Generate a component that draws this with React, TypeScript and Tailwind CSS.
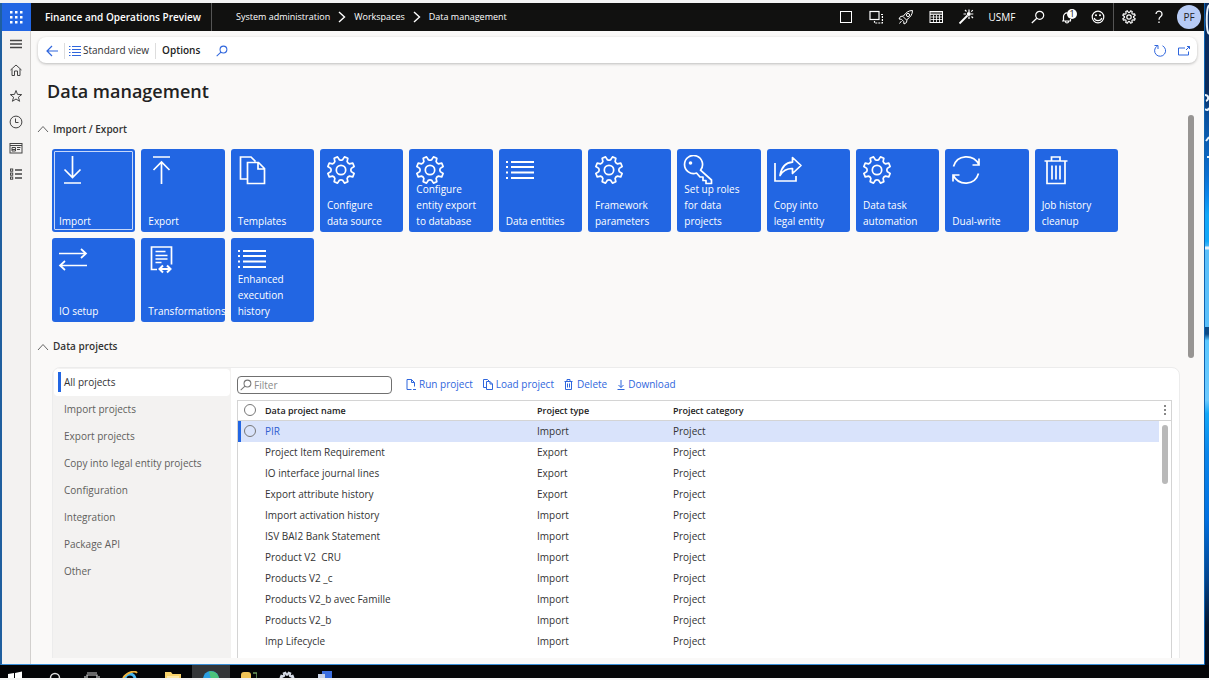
import React, { useState } from 'react';

type IconProps = { className?: string };

// Outline of a cog wheel with flat topped teeth
const gearPath = (c: number, teeth: number, outer: number, inner: number) => {
  const step = (Math.PI * 2) / teeth;
  const pt = (r: number, a: number) => `${(c + r * Math.cos(a)).toFixed(2)} ${(c + r * Math.sin(a)).toFixed(2)}`;
  let d = '';
  for (let i = 0; i < teeth; i++) {
    const a = i * step - Math.PI / 2 + step / 2;
    d += `${i === 0 ? 'M' : 'L'}${pt(inner, a - step * 0.3)} L${pt(outer, a - step * 0.17)} L${pt(outer, a + step * 0.17)} L${pt(inner, a + step * 0.3)} `;
    d += `Q${pt(inner - 1, a + step * 0.5)} ${pt(inner, a + step * 0.7)} `;
  }
  return d + 'Z';
};

const Svg: React.FC<{ size: number; w?: number; sw?: number; className?: string; children: React.ReactNode }> = ({
  size,
  w,
  sw = 1,
  className,
  children,
}) => (
  <svg
    width={w ?? size}
    height={size}
    viewBox={`0 0 ${w ?? size} ${size}`}
    fill="none"
    stroke="currentColor"
    strokeWidth={sw}
    className={className}
    aria-hidden="true"
  >
    {children}
  </svg>
);

/* ---------- tile icons, 30 x 30 ---------- */
const ImportIcon = () => (
  <Svg size={30} sw={1.7}><path d="M14.500 1v21M6.500 14.500l8 8 8-8M6 28h17" /></Svg>
);
const ExportIcon = () => (
  <Svg size={30} sw={1.7}><path d="M14.500 29V7M6.500 15l8-8 8 8M6 2h17" /></Svg>
);
const TemplatesIcon = () => (
  <Svg size={30} sw={1.7}><path d="M10 24H3.500V2h10.500l4.500 4.500M10.500 7.500h11l6 6v15h-17zM21 7.500v6.500h6.500" /></Svg>
);
const GearIcon = () => (
  <Svg size={30} sw={1.7}><path d={gearPath(15, 8, 13.6, 10.4)} strokeLinejoin="round" /><circle cx="15" cy="15" r="4.700" /></Svg>
);
const ListIcon = () => (
  <Svg size={30} sw={1.8}><path d="M6 7h23M6 12h23M6 17.500h23M6 23h23" /><path d="M1 7h2M1 12h2M1 17.500h2M1 23h2" /></Svg>
);
const KeyIcon = () => (
  <Svg size={30} sw={1.7}>
    <path d="M17.500 15.200L28.500 25v3.500h-5.500v-3h-3v-3.500h-3l-3.500-4A9 9 0 1 1 17.500 15.200z" strokeLinejoin="round" />
    <circle cx="7.500" cy="8" r="1.800" fill="currentColor" stroke="none" />
  </Svg>
);
const ShareIcon = () => (
  <Svg size={30} sw={1.7}>
    <path d="M2 8v18h21v-5" />
    <path d="M7 20.500C8.500 11.500 13 7.500 19.500 7.200V2.500L28 10.500l-8.500 8v-5C14 13.300 10 15.500 7 20.500z" strokeLinejoin="round" />
  </Svg>
);
const SyncIcon = () => (
  <Svg size={30} sw={1.7}><path d="M2.500 11.500C6 -.5 22 -1.500 28 9.500M28 3.500v6.500h-6.500M27.500 18.500C24 30.500 8 31.500 2 20M2 26.500V20h6.500" /></Svg>
);
const TrashIcon = () => (
  <Svg size={30} sw={1.7}><path d="M3.500 6h23M10.500 5.500V2h8.500v3.500M6 6v22.500h18V6M11 10.500v14M15 10.500v14M19 10.500v14" /></Svg>
);
const SwapIcon = () => (
  <Svg size={30} sw={1.7}><path d="M1 9.500h27M23 5l5 4.500-5 4.500M29 21.500H2M7 17l-5 4.500L7 26" /></Svg>
);
const TransformIcon = () => (
  <Svg size={30} sw={1.7}>
    <path d="M10 25.500H4.500V3h20v17.500M8.500 7.500h10M8.500 11.500h12M8.500 15h12M8.500 18.500h6" />
    <path d="M12.500 25h11M16 21.500L12.500 25l3.500 3.500M20 21.500l3.500 3.500-3.500 3.500" strokeWidth="2" />
  </Svg>
);

/* ---------- small icons ---------- */
const Chevron = ({ className }: IconProps) => (
  <Svg size={12} w={8} sw={1.4} className={className}><path d="M1 1l5.500 5L1 11" /></Svg>
);
const ChevronUp = () => (
  <Svg size={8} w={12} className="text-[#666]"><path d="M1 7l5-5.500L11 7" /></Svg>
);
const SearchIcon = ({ className }: IconProps) => (
  <svg
    width="14"
    height="14"
    viewBox="0 0 14 14"
    fill="none"
    stroke="currentColor"
    strokeWidth="1.200"
    className={className}
    aria-hidden="true"
  >
    <circle cx="8.700" cy="5.300" r="4" />
    <path d="M5.800 8.200L.8 13" />
  </svg>
);
const CogSmall = () => (
  <Svg size={14} sw={1.2}><path d={gearPath(7, 8, 6.4, 5)} strokeLinejoin="round" /><circle cx="7" cy="7" r="2.200" /></Svg>
);

const HEADER_ICONS = [
  { id: 'window', label: 'Window', icon: <Svg size={14}><rect x="1.500" y="1.500" width="11" height="11" /></Svg> },
  {
    id: 'session',
    label: 'Session',
    icon: (
      <Svg size={14} sw={1.2}>
        <rect x="1" y="1.500" width="9" height="8" />
        <path d="M12 4.500h1.400v8.500H5.500v-2" strokeDasharray="2 1" />
      </Svg>
    ),
  },
  {
    id: 'launch',
    label: 'What is new',
    icon: (
      <Svg size={16}>
        <path d="M14.500 1.500c-4 0-6.500 2-9 5.500l-3 .5L1 10l2.500.3 2.200 2.200L6 15l2.500-1.500.5-3c3.500-2.500 5.500-5 5.500-9z" strokeLinejoin="round" />
        <circle cx="10" cy="6" r="1.600" />
        <path d="M3.500 12L1.500 14.500M5 7.500l3.500 3.500" />
      </Svg>
    ),
  },
  {
    id: 'calendar',
    label: 'Calendar',
    icon: (
      <Svg size={14}>
        <rect x="1" y="1.500" width="12.500" height="11" />
        <path d="M1 4.500h12.500M1 3h12.500M4.500 5v7M7.500 5v7M10.500 5v7M1.500 7h12M1.500 9.500h12" strokeWidth="0.800" />
      </Svg>
    ),
  },
  {
    id: 'wand',
    label: 'Wand',
    icon: (
      <Svg size={16} sw={1.2}>
        <path d="M1.500 14.500L9.500 6.500" strokeWidth="1.800" />
        <path d="M11 .5V3M15.300 5h-2.500M11 10V7.500M5.500 5h2.500M7 1l1.500 1.500M15 9l-1.500-1.500M14.800 1.200l-1.500 1.500" />
        <circle cx="10.800" cy="5" r="2" fill="currentColor" stroke="none" />
      </Svg>
    ),
  },
];

const SIDE_ICONS = [
  { id: 'menu', label: 'Expand the navigation pane', icon: <Svg size={14} sw={1.4}><path d="M1 3.500h12M1 7h12M1 10.500h12" /></Svg> },
  {
    id: 'home',
    label: 'Home',
    icon: <Svg size={14}><path d="M1.500 7L7 2l5.500 5M3 6v6.500h2.500V8h3v4.500H11V6" /></Svg>,
  },
  {
    id: 'favorites',
    label: 'Favorites',
    icon: <Svg size={14}><path d="M7 1.500l1.500 3.900 4.200.2-3.300 2.600 1.200 4.100L7 10l-3.600 2.300 1.200-4.100L1.300 5.600l4.200-.2z" /></Svg>,
  },
  {
    id: 'recent',
    label: 'Recent',
    icon: <Svg size={14}><circle cx="7" cy="7" r="5.900" /><path d="M6.500 3.500v4H9.500" /></Svg>,
  },
  {
    id: 'workspaces',
    label: 'Workspaces',
    icon: <Svg size={14}><rect x="1" y="2.500" width="12" height="9.500" /><path d="M1 4.500h12M3 6.500h3.500v3.500H3zM8 6.500h3.500M8 8.500h3M3 8.500h3" /></Svg>,
  },
  {
    id: 'modules',
    label: 'Modules',
    icon: <Svg size={14}><path d="M6 3h7M6 7h7M6 11h7" strokeWidth="1.300" /><rect x="1.500" y="2" width="2.200" height="2.200" /><rect x="1.500" y="6" width="2.200" height="2.200" /><rect x="1.500" y="10" width="2.200" height="2.200" /></Svg>,
  },
];

const TILES = [
  { label: 'Import', icon: <ImportIcon /> },
  { label: 'Export', icon: <ExportIcon /> },
  { label: 'Templates', icon: <TemplatesIcon /> },
  { label: 'Configure data source', icon: <GearIcon /> },
  { label: 'Configure entity export to database', icon: <GearIcon /> },
  { label: 'Data entities', icon: <ListIcon /> },
  { label: 'Framework parameters', icon: <GearIcon /> },
  { label: 'Set up roles for data projects', icon: <KeyIcon /> },
  { label: 'Copy into legal entity', icon: <ShareIcon /> },
  { label: 'Data task automation', icon: <GearIcon /> },
  { label: 'Dual-write', icon: <SyncIcon /> },
  { label: 'Job history cleanup', icon: <TrashIcon /> },
  { label: 'IO setup', icon: <SwapIcon /> },
  { label: 'Transformations', icon: <TransformIcon /> },
  { label: 'Enhanced execution history', icon: <ListIcon /> },
];

const CATEGORIES = [
  'All projects',
  'Import projects',
  'Export projects',
  'Copy into legal entity projects',
  'Configuration',
  'Integration',
  'Package API',
  'Other',
];

const PROJECTS = [
  { name: 'PIR', type: 'Import' },
  { name: 'Project Item Requirement', type: 'Export' },
  { name: 'IO interface journal lines', type: 'Export' },
  { name: 'Export attribute history', type: 'Export' },
  { name: 'Import activation history', type: 'Import' },
  { name: 'ISV BAI2 Bank Statement', type: 'Import' },
  { name: 'Product V2  CRU', type: 'Import' },
  { name: 'Products V2 _c', type: 'Import' },
  { name: 'Products V2_b avec Famille', type: 'Import' },
  { name: 'Products V2_b', type: 'Import' },
  { name: 'Imp Lifecycle', type: 'Import' },
];

const ACTIONS = [
  {
    label: 'Run project',
    icon: <Svg size={12} w={10}><path d="M5.500 10.500H1V.5h4.500l3 3v4M5.500.5v3h3M7 10.500h3" /></Svg>,
  },
  {
    label: 'Load project',
    icon: <Svg size={12} w={10}><path d="M3 8.500H.5V.5h4L6 2M3.500 2.500H7L9.500 5v5.500h-6zM7 2.500V5h2.500" /></Svg>,
  },
  {
    label: 'Delete',
    icon: <Svg size={12} w={10}><path d="M.5 2.500h8M3 2.500v-2h3v2M1.500 2.500v8h6v-8M3.500 4.500v4M5.500 4.500v4" /></Svg>,
  },
  {
    label: 'Download',
    icon: <Svg size={12} w={8}><path d="M4 1v7.500M1.500 6L4 8.500 6.500 6M.5 10.500h7" /></Svg>,
  },
];

const TopBar = () => (
  <header className="flex h-[28px] shrink-0 items-stretch bg-[#111110] text-[10px] text-white">
    <button aria-label="App launcher" className="flex w-[29px] items-center justify-center bg-[#2266e3]">
      <svg width="13" height="13" viewBox="0 0 13 13" fill="#fff" aria-hidden="true">
        {[0, 5, 10].map((y) => [0, 5, 10].map((x) => <rect key={`${x}-${y}`} x={x} y={y} width="2.500" height="2.500" />))}
      </svg>
    </button>
    <div className="flex w-[181px] items-center whitespace-nowrap border-r border-[#555] pl-3.5 font-semibold">
      Finance and Operations Preview
    </div>
    <nav aria-label="Breadcrumb" className="flex flex-1 items-center gap-2 whitespace-nowrap pl-6 text-[9px]">
      <a href="#system">System administration</a>
      <Chevron />
      <a href="#workspaces">Workspaces</a>
      <Chevron />
      <a href="#data">Data management</a>
    </nav>
    {HEADER_ICONS.map((item) => (
      <button key={item.id} aria-label={item.label} className="flex w-[30px] items-center justify-center">
        {item.icon}
      </button>
    ))}
    <button className="w-[42px]">USMF</button>
    <button aria-label="Search" className="flex w-[30px] items-center justify-center"><SearchIcon /></button>
    <button aria-label="Notifications" className="relative flex w-[30px] items-center justify-center">
      <Svg size={14} sw={1.2}><path d="M1 11h9M2.500 11V6.500a3.500 3.500 0 0 1 4-3.500M4.500 11.500a1.500 1.500 0 0 0 3 0M9.500 9v2" /></Svg>
      <span className="absolute right-[6px] top-[6px] flex size-[10px] items-center justify-center rounded-full bg-white text-[9px] text-[#111110]">1</span>
    </button>
    <button aria-label="Feedback" className="flex w-[30px] items-center justify-center">
      <Svg size={14} sw={1.2}>
        <circle cx="7" cy="7" r="5.800" />
        <path d="M3.200 8c1 3.500 6.600 3.500 7.600 0" />
        <circle cx="5" cy="5.300" r="1" fill="currentColor" stroke="none" />
        <circle cx="9" cy="5.300" r="1" fill="currentColor" stroke="none" />
      </Svg>
    </button>
    <button aria-label="Settings" className="flex w-[31px] items-center justify-center border-l border-[#555]"><CogSmall /></button>
    <button aria-label="Help" className="flex w-[30px] items-center justify-center">
      <Svg size={14} w={10} sw={1.3}><path d="M2 4a3 3 0 1 1 4.500 2.700C5.300 7.500 5 8 5 9.800M5 11.500v1.500" /></Svg>
    </button>
    <button aria-label="Account" className="flex w-[30px] items-center justify-center">
      <span className="flex size-6 items-center justify-center rounded-full bg-[#b7cbf5] text-[10px] text-[#222]">PF</span>
    </button>
  </header>
);

const CommandBar = () => (
  <div className="mx-[7px] mt-1.5 flex h-[26px] shrink-0 items-center rounded-lg bg-white pl-2 pr-1.5 pt-px text-[10px] text-[#333] shadow-[0_1px_3px_rgba(0,0,0,0.25)]">
    <button aria-label="Back" className="text-[#2f66dd]">
      <Svg size={12} sw={1.2}><path d="M12 6H1M6 1L1 6l5 5" /></Svg>
    </button>
    <div className="ml-1.5 flex h-4 items-center border-x border-[#ddd] pl-1 pr-1.5">
      <button className="flex items-center gap-0.5 whitespace-nowrap">
        <span className="text-[#2f66dd]">
          <Svg size={10} w={12}><path d="M3 .5h9M3 3.500h9M3 6.500h9M3 9.500h9M0 .5h1.500M0 3.500h1.500M0 6.500h1.500M0 9.500h1.500" /></Svg>
        </span>
        Standard view
      </button>
    </div>
    <button className="ml-1.5 font-semibold text-[#222]">Options</button>
    <button aria-label="Search actions" className="ml-4 text-[#2f66dd]"><SearchIcon className="size-3" /></button>
    <button aria-label="Refresh" className="ml-auto text-[#2f66dd]">
      <Svg size={14}><path d="M9.500 1.800A5.500 5.500 0 1 1 4 2.200M1.500 1.500h3.500v3.500" /></Svg>
    </button>
    <button aria-label="Open in new window" className="ml-2.5 text-[#2f66dd]">
      <Svg size={14}><path d="M8 4H1.500v7h10V7.500M9 6l3.500-3.500M10 2.500h2.500V5" /></Svg>
    </button>
  </div>
);

const SectionHeader: React.FC<{ title: string; open: boolean; onToggle: () => void }> = ({ title, open, onToggle }) => (
  <h2>
    <button onClick={onToggle} aria-expanded={open} className="flex h-4 items-center gap-1 text-[10px] font-semibold text-[#333]">
      <ChevronUp />
      {title}
    </button>
  </h2>
);

const ProjectTable: React.FC<{ selected: string; onSelect: (n: string) => void; rows: typeof PROJECTS }> = ({
  selected,
  onSelect,
  rows,
}) => (
  <div className="flex min-h-[260px] flex-1 border border-b-0 border-[#d4d4d4]">
    <table className="flex-1 table-fixed self-start text-left text-[10px] text-[#333]">
      <colgroup>
        <col className="w-[27px]" />
        <col className="w-[272px]" />
        <col className="w-[136px]" />
        <col />
      </colgroup>
      <thead>
        <tr className="h-5 border-b border-[#d4d4d4] text-[9px] text-[#222]">
          <th className="pl-1.5">
            <input type="checkbox" aria-label="Select all" className="block size-3 appearance-none rounded-full border border-[#777]" />
          </th>
          <th className="font-semibold">Data project name</th>
          <th className="font-semibold">Project type</th>
          <th className="font-semibold">Project category</th>
        </tr>
      </thead>
      <tbody>
        {rows.map((p) => {
          const active = p.name === selected;
          return (
            <tr key={p.name} onClick={() => onSelect(p.name)} className={active ? 'h-[21px] bg-[#d9e3fb]' : 'h-[21px]'}>
              <td className={active ? 'bg-[linear-gradient(#2266e3,#2266e3)] bg-[length:3px_100%] bg-no-repeat pl-1.5' : 'pl-1.5'}>
                {active && (
                  <input type="radio" name="project" aria-label={p.name} className="block size-3 appearance-none rounded-full border border-[#777]" />
                )}
              </td>
              <td className={active ? 'text-[#2f5fd0]' : 'whitespace-pre'}>{p.name}</td>
              <td>{p.type}</td>
              <td>Project</td>
            </tr>
          );
        })}
      </tbody>
    </table>
    <div className="w-3 shrink-0">
      <button aria-label="Grid options" className="flex h-5 w-full items-center justify-center border-b border-[#d4d4d4]">
        <svg width="2" height="10" viewBox="0 0 2 10" fill="#888" aria-hidden="true">
          <path d="M0 0h2v2H0zM0 4h2v2H0zM0 8h2v2H0z" />
        </svg>
      </button>
      <div className="mx-auto mt-1 h-[59px] w-1.5 rounded-full bg-[#b9b9b9]" />
    </div>
  </div>
);

// Slice of the desktop that shows beside the browser window
const Wallpaper = () => (
  <div className="w-[5px] shrink-0 overflow-hidden border-l border-[#0e63b0] bg-[linear-gradient(180deg,#0b2d60_0%,#0a2a5a_13%,#0a4f9c_17%,#0a6fd0_26%,#0b86ea_29%,#12a8f8_32%,#12a8f8_36%,#5cc0fa_37%,#5cc0fa_49%,#0c4a86_49%,#0c4a86_50%,#5cc8ff_51%,#6ccaff_60%,#12a8f8_62%,#0a86ea_68%,#0070e0_78%,#04448c_87%,#03152e_94%,#020a18_100%)]">
    <svg width="4" height="260" viewBox="0 0 4 260" fill="none" stroke="#e8f2fb" strokeWidth="2" aria-hidden="true">
      <path d="M4 2C1 6 1 28 4 31M0 92c4 0 4 5 1 6M0 106c2 2 3 1 4-1M4 134l-3 4M2 154h2" />
      <path d="M0 245h4" strokeWidth="3" />
    </svg>
  </div>
);

const TASKS = [
  { id: 'Start', icon: <path d="M0 3l6-1v6H0zM7 2l7-1.500V8H7z" fill="#fff" /> },
  { id: 'Search', icon: <circle cx="8" cy="7" r="4.500" fill="none" stroke="#ddd" strokeWidth="1.500" /> },
  { id: 'Task view', icon: <path d="M3 9V4h10v5M1 5v5M15 5v5M3 2h10" fill="none" stroke="#ccc" strokeWidth="1.200" /> },
  {
    id: 'Internet Explorer',
    icon: (
      <>
        <circle cx="8" cy="8" r="5" fill="none" stroke="#47b5ee" strokeWidth="3" />
        <path d="M1 7C5 1 13-1 15 2" fill="none" stroke="#f0b43c" strokeWidth="1.800" />
      </>
    ),
  },
  { id: 'File Explorer', icon: <><path d="M0 1h6l1.500 2H16v8H0z" fill="#f7d26a" /><path d="M2 5h12v2H2z" fill="#fbe7a6" /></> },
  { id: 'Edge', icon: <><circle cx="8" cy="8" r="8" fill="#2a9ee0" /><path d="M6 .5c6-1 10 3 10 8H8z" fill="#4bc27a" /></> },
  { id: 'Database', icon: <><rect x="0" y="1" width="10" height="9" rx="3" fill="#f0c356" /><path d="M12 2h4v7" stroke="#6b9a5c" strokeWidth="1.500" fill="none" /></> },
  { id: 'Settings', icon: <path d={gearPath(8, 8, 6.5, 4.8)} fill="none" stroke="#d6dbe6" strokeWidth="2" /> },
  { id: 'Remote Desktop', icon: <><rect x="5" y="0" width="10" height="8" fill="#3c6fe0" /><rect x="1" y="3" width="7" height="7" fill="#c8d2e6" /></> },
];

const Taskbar = () => (
  <footer className="grid h-[13px] shrink-0 grid-cols-[32px_46px_28px_48px_repeat(5,38px)] overflow-hidden bg-[#020305]">
    {TASKS.map((t) => (
      <button key={t.id} aria-label={t.id} className={t.id === 'Edge' ? 'flex justify-center bg-[#333537] pt-1.5' : 'flex justify-center pt-1.5'}>
        <svg width="16" height="16" viewBox="0 0 16 16" aria-hidden="true">{t.icon}</svg>
      </button>
    ))}
  </footer>
);

const App: React.FC = () => {
  const [tilesOpen, setTilesOpen] = useState(true);
  const [projectsOpen, setProjectsOpen] = useState(true);
  const [category, setCategory] = useState('All projects');
  const [selected, setSelected] = useState('PIR');
  const [filter, setFilter] = useState('');

  const rows = PROJECTS.filter((p) => p.name.toLowerCase().includes(filter.toLowerCase()));

  return (
    <div className="flex h-screen flex-col overflow-hidden bg-[#f4f4f4] pb-0.5 pt-[3px] font-['Open_Sans','Noto_Sans',sans-serif]">
      <div className="flex min-h-0 flex-1">
        <div className="flex min-w-0 flex-1 flex-col border-b border-l-2 border-b-[#3a8fd8] border-l-[#1f5f9f] bg-[#faf9f8]">
          <TopBar />
          <div className="flex min-h-0 flex-1">
            <nav aria-label="Main" className="flex w-[29px] shrink-0 flex-col border-r border-[#d2d0ce] bg-[#f3f2f1] text-[#444]">
              {SIDE_ICONS.map((item) => (
                <button key={item.id} aria-label={item.label} className="flex h-[26px] items-center justify-center">
                  {item.icon}
                </button>
              ))}
            </nav>

            <main className="flex min-w-0 flex-1 flex-col">
              <CommandBar />
              <h1 className="mb-2.5 mt-3.5 pl-4 text-[18px] font-semibold leading-7 text-[#222]">Data management</h1>

              <div className="mb-1.5 flex min-h-0 flex-1 overflow-hidden">
                <div className="min-w-0 flex-1 pl-1.5 pt-1.5">
                  <SectionHeader title="Import / Export" open={tilesOpen} onToggle={() => setTilesOpen(!tilesOpen)} />
                  {tilesOpen && (
                    <div className="ml-[15px] mr-[62px] mt-3 grid grid-cols-12 gap-1.5">
                      {TILES.map((tile, i) => (
                        <button
                          key={tile.label}
                          className={`relative flex aspect-square min-w-0 flex-col justify-end rounded-[3px] bg-[#2266e3] pb-[3px] pl-[7px] pr-3 text-left text-[10px] leading-4 text-white ${
                            i === 0 ? 'outline outline-1 -outline-offset-3 outline-[#c8d8fa]' : ''
                          }`}
                        >
                          <span className="absolute left-1.5 top-1.5">{tile.icon}</span>
                          <span className="relative">{tile.label}</span>
                        </button>
                      ))}
                    </div>
                  )}

                  <div className="mt-[17px]">
                    <SectionHeader title="Data projects" open={projectsOpen} onToggle={() => setProjectsOpen(!projectsOpen)} />
                  </div>
                  {projectsOpen && (
                    <div className="ml-[15px] mt-3 flex h-[400px] overflow-hidden rounded-lg border border-[#ececec] bg-white">
                      <ul className="w-[178px] shrink-0 bg-[#f3f2f1] px-px pt-px text-[10px] text-[#605e5c]">
                        {CATEGORIES.map((c) => (
                          <li key={c}>
                            <button
                              onClick={() => setCategory(c)}
                              className={`flex h-[27px] w-full items-center gap-[3px] whitespace-nowrap pl-1 ${
                                c === category ? 'rounded bg-white text-[#333]' : ''
                              }`}
                            >
                              <span className={`h-5 w-[3px] ${c === category ? 'bg-[#2266e3]' : ''}`} />
                              {c}
                            </button>
                          </li>
                        ))}
                      </ul>
                      <div className="flex min-w-0 flex-1 flex-col pl-1.5 pr-[7px] pt-2">
                        <div className="mb-1.5 flex h-[18px] items-center">
                          <label className="mr-3.5 flex h-[18px] w-[155px] items-center gap-0.5 rounded border border-[#707070] bg-white px-0.5">
                            <SearchIcon className="size-3 shrink-0 text-[#777]" />
                            <input
                              type="text"
                              aria-label="Filter"
                              placeholder="Filter"
                              value={filter}
                              onChange={(e) => setFilter(e.target.value)}
                              className="min-w-0 flex-1 text-[10px] leading-4 outline-none placeholder:text-[#8a8a8a]"
                            />
                          </label>
                          <div className="flex gap-2.5 text-[10px] text-[#2f66dd]">
                            {ACTIONS.map((a) => (
                              <button key={a.label} className="flex items-center gap-[3px] whitespace-nowrap">
                                {a.icon}
                                {a.label}
                              </button>
                            ))}
                          </div>
                        </div>
                        <ProjectTable selected={selected} onSelect={setSelected} rows={rows} />
                      </div>
                    </div>
                  )}
                </div>
                <div className="w-6 shrink-0 pl-2">
                  <div className="h-[243px] w-1.5 rounded-full bg-[#979593]" />
                </div>
              </div>
            </main>
          </div>
        </div>
        <Wallpaper />
      </div>
      <Taskbar />
    </div>
  );
};

export default App;
